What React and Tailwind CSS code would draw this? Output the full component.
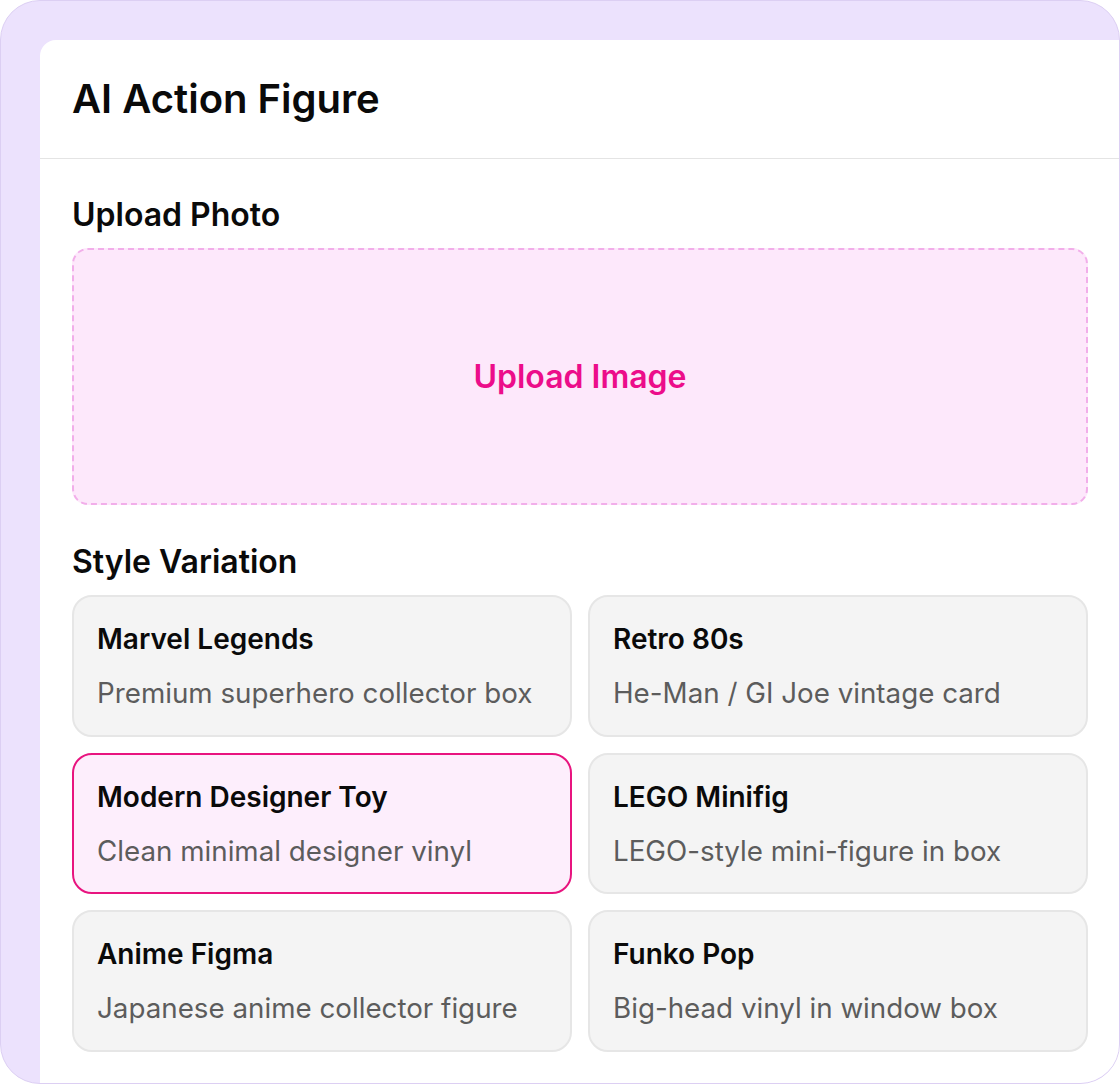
import React from "react";

const styles = [
  { t: "Marvel Legends", d: "Premium superhero collector box" },
  { t: "Retro 80s", d: "He-Man / GI Joe vintage card" },
  { t: "Modern Designer Toy", d: "Clean minimal designer vinyl", sel: true },
  { t: "LEGO Minifig", d: "LEGO-style mini-figure in box" },
  { t: "Anime Figma", d: "Japanese anime collector figure" },
  { t: "Funko Pop", d: "Big-head vinyl in window box" },
];

export default function App() {
  return (
    <div
      className="w-[1120px] h-[1084px] box-border rounded-[40px] border border-[#dccff3] bg-[#ece2fd] overflow-hidden pl-[39px] pt-[39px]"
      style={{ fontFamily: "Inter, 'Noto Sans', sans-serif" }}
    >
      <div className="w-[1080px] h-[1100px] bg-white rounded-tl-[16px]">
        <div className="h-[119px] px-8 flex items-center border-b border-[#e4e4e4]">
          <h1 className="text-[40px] font-semibold text-[#0a0a0a] leading-[48px]">AI Action Figure</h1>
        </div>
        <div className="px-8 pt-8">
          <div className="text-[32px] font-semibold leading-[48px] text-[#0a0a0a]">Upload Photo</div>
          <div className="mt-[9px] h-[257px] rounded-[16px] border-2 border-dashed border-[#f2aeea] bg-[#fde8fb] flex items-center justify-center">
            <span className="text-[32px] font-semibold text-[#ec0d8a]">Upload Image</span>
          </div>
          <div className="mt-[33px] text-[32px] font-semibold leading-[48px] text-[#0a0a0a]">Style Variation</div>
          <div className="mt-[9px] grid grid-cols-2 gap-x-[16px] gap-y-[16px]">
            {styles.map((s) => (
              <div
                key={s.t}
                className={
                  s.sel
                    ? "h-[141.5px] box-border rounded-[20px] border-2 border-[#e8147f] bg-[#fdeefc] px-[23px] pt-[24px]"
                    : "h-[141.5px] box-border rounded-[20px] border-2 border-[#e6e6e6] bg-[#f4f4f4] px-[23px] pt-[24px]"
                }
              >
                <div className="text-[28px] font-semibold leading-[36px] text-[#0a0a0a]">{s.t}</div>
                <div className="mt-[18px] text-[27.75px] leading-[36px] text-[#5c5c5c]">{s.d}</div>
              </div>
            ))}
          </div>
        </div>
      </div>
    </div>
  );
}
